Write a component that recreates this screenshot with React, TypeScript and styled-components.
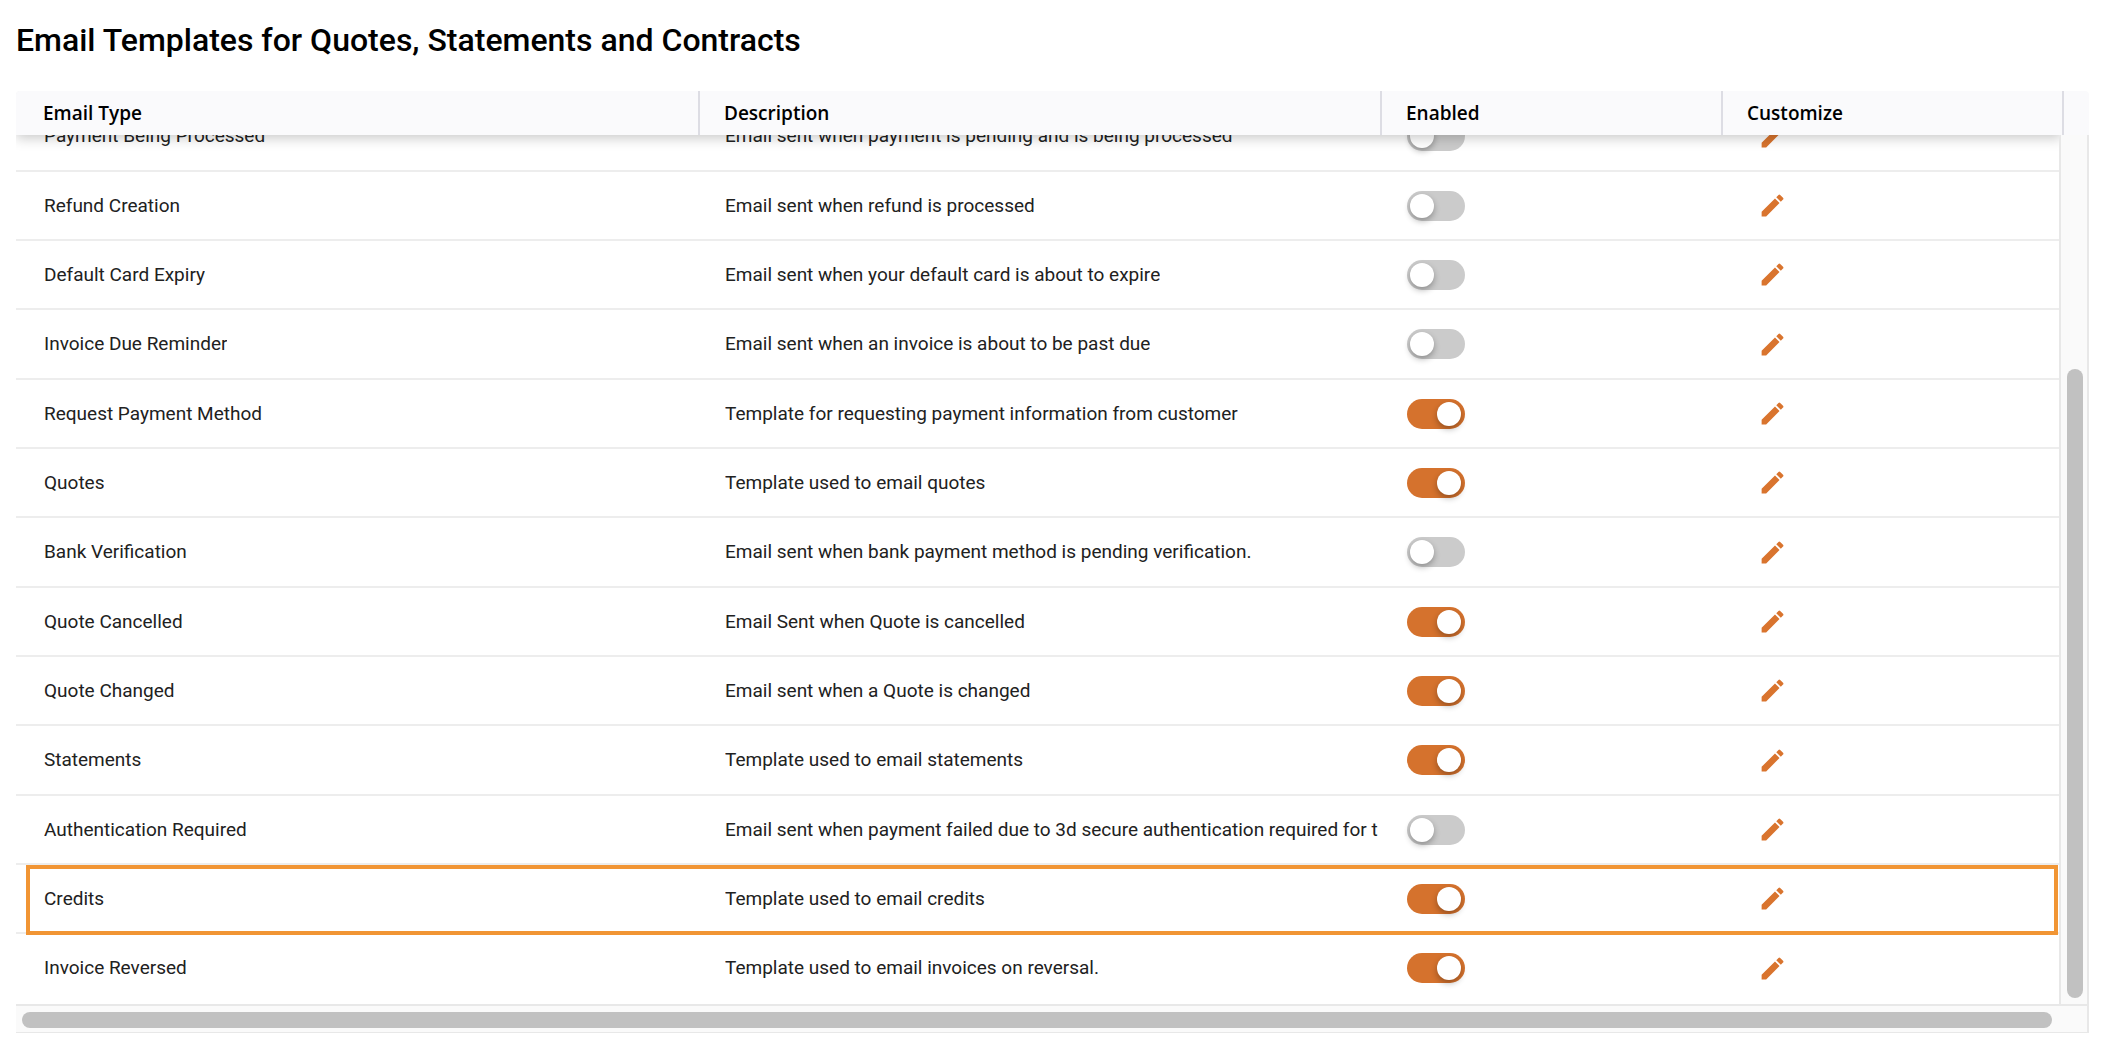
import React, { useState } from "react";
import styled, { createGlobalStyle } from "styled-components";
import { MdEdit } from "react-icons/md";

const GlobalStyle = createGlobalStyle`
  *, *::before, *::after { box-sizing: border-box; }
  body { margin: 0; background: #fff; }
`;

const Page = styled.main`
  display: flex;
  flex-direction: column;
  height: 100vh;
  padding: 16px 19px 9px 16px;
  font-family: Roboto, sans-serif;
  color: #212121;
`;

const Title = styled.h1`
  margin: 0 0 27px;
  font-size: 32px;
  line-height: 48px;
  font-weight: 500;
  color: #000;
`;

const Frame = styled.section`
  flex: 1;
  min-height: 0;
  display: grid;
  grid-template-columns: minmax(0, 1fr) 27px;
  grid-template-rows: 44px minmax(0, 1fr) 29px;
  border-radius: 4px 4px 0 0;
  overflow: hidden;
`;

const Table = styled.table`
  grid-column: 1;
  grid-row: 1 / 3;
  min-height: 0;
  display: grid;
  grid-template-rows: 44px minmax(0, 1fr);
`;

const Head = styled.thead`
  display: block;
  z-index: 1;
  background: #fafafc;
  box-shadow: 0 3px 12px rgba(0, 0, 0, 0.22);
`;

const Body = styled.tbody`
  display: flex;
  flex-direction: column;
  justify-content: flex-end;
  min-height: 0;
  overflow: hidden;
`;

const HeadRow = styled.tr`
  display: grid;
  grid-template-columns: 2fr 2fr 1fr 1fr;
`;

const HeadCell = styled.th`
  height: 44px;
  padding: 0 24px;
  border-left: 2px solid #dddde4;
  font-family: "Open Sans", sans-serif;
  font-size: 19px;
  line-height: 44px;
  font-weight: 600;
  text-align: left;
  color: #000;

  &:first-child {
    padding-left: 27px;
    border-left: 0;
  }
`;

const Corner = styled.div`
  z-index: 2;
  border-left: 2px solid #dddde4;
  background: #fafafc;
`;

const Row = styled.tr<{ $marked?: boolean }>`
  position: relative;
  flex: none;
  display: grid;
  grid-template-columns: 2fr 2fr 1fr 1fr;
  height: 69px;
  border-bottom: 2px solid #ededed;

  &:nth-child(3n + 1) {
    height: 70px;
  }

  &:last-child {
    border-bottom-color: transparent;
  }

  ${(p) =>
    p.$marked &&
    `&::after {
      content: "";
      position: absolute;
      inset: 0 4px -3px 10px;
      border: 4px solid #f19534;
      pointer-events: none;
      z-index: 1;
    }`}
`;

const Cell = styled.td`
  display: flex;
  align-items: center;
  min-width: 0;
  padding: 0 2px 0 27px;
  font-size: 19px;
  line-height: 28px;

  &:first-child {
    padding-left: 28px;
  }
`;

const Text = styled.span`
  overflow: hidden;
  white-space: nowrap;
`;

const Switch = styled.input`
  appearance: none;
  flex: none;
  display: flex;
  align-items: center;
  width: 58px;
  height: 30px;
  margin: 0;
  padding: 0 4px 0 3px;
  border-radius: 15px;
  background: #cbcbcb;
  cursor: pointer;

  &::before {
    content: "";
    width: 24px;
    height: 24px;
    border-radius: 50%;
    background: #fff;
    box-shadow: 0 3px 6px rgba(0, 0, 0, 0.3);
  }

  &:checked {
    justify-content: flex-end;
    background: #d5722d;
  }
`;

const EditButton = styled.button`
  display: flex;
  margin: 0 0 0 10px;
  padding: 0;
  border: 0;
  background: none;
  color: #d9742e;
  cursor: pointer;
`;

const VerticalTrack = styled.div`
  grid-column: 2;
  grid-row: 2;
  z-index: 2;
  display: flex;
  flex-direction: column;
  margin-left: -3px;
  padding: 234px 4px 6px 6px;
  border: 2px solid #e8e8e8;
  border-top: 0;
  border-bottom: 0;
  background: #fafafa;
`;

const HorizontalTrack = styled.div`
  grid-column: 1 / 3;
  grid-row: 3;
  padding: 6px 35px 4px 6px;
  border: 1px solid #e8e8e8;
  border-width: 2px 2px 1px 0;
  background: #fafafa;
`;

const Thumb = styled.div`
  flex: 1;
  height: 16px;
  border-radius: 8px;
  background: #c1c1c1;
`;

type Template = { name: string; description: string; enabled: boolean; marked?: boolean };

const templates: Template[] = [
  { name: "Payment Being Processed", description: "Email sent when payment is pending and is being processed", enabled: false },
  { name: "Refund Creation", description: "Email sent when refund is processed", enabled: false },
  { name: "Default Card Expiry", description: "Email sent when your default card is about to expire", enabled: false },
  { name: "Invoice Due Reminder", description: "Email sent when an invoice is about to be past due", enabled: false },
  { name: "Request Payment Method", description: "Template for requesting payment information from customer", enabled: true },
  { name: "Quotes", description: "Template used to email quotes", enabled: true },
  { name: "Bank Verification", description: "Email sent when bank payment method is pending verification.", enabled: false },
  { name: "Quote Cancelled", description: "Email Sent when Quote is cancelled", enabled: true },
  { name: "Quote Changed", description: "Email sent when a Quote is changed", enabled: true },
  { name: "Statements", description: "Template used to email statements", enabled: true },
  { name: "Authentication Required", description: "Email sent when payment failed due to 3d secure authentication required for t", enabled: false },
  { name: "Credits", description: "Template used to email credits", enabled: true, marked: true },
  { name: "Invoice Reversed", description: "Template used to email invoices on reversal.", enabled: true },
];

function TemplateRow({ template }: { template: Template }) {
  const [enabled, setEnabled] = useState(template.enabled);
  return (
    <Row $marked={template.marked}>
      <Cell><Text>{template.name}</Text></Cell>
      <Cell><Text>{template.description}</Text></Cell>
      <Cell>
        <Switch
          type="checkbox"
          role="switch"
          aria-label={`Enable ${template.name}`}
          checked={enabled}
          onChange={(e) => setEnabled(e.target.checked)}
        />
      </Cell>
      <Cell>
        <EditButton type="button" aria-label={`Customize ${template.name}`}>
          <MdEdit size={29} />
        </EditButton>
      </Cell>
    </Row>
  );
}

export default function App() {
  return (
    <Page>
      <GlobalStyle />
      <Title>Email Templates for Quotes, Statements and Contracts</Title>
      <Frame>
        <Table>
          <Head>
            <HeadRow>
              <HeadCell>Email Type</HeadCell>
              <HeadCell>Description</HeadCell>
              <HeadCell>Enabled</HeadCell>
              <HeadCell>Customize</HeadCell>
            </HeadRow>
          </Head>
          <Body>
            {templates.map((t) => (
              <TemplateRow key={t.name} template={t} />
            ))}
          </Body>
        </Table>
        <Corner />
        <VerticalTrack><Thumb /></VerticalTrack>
        <HorizontalTrack><Thumb /></HorizontalTrack>
      </Frame>
    </Page>
  );
}
